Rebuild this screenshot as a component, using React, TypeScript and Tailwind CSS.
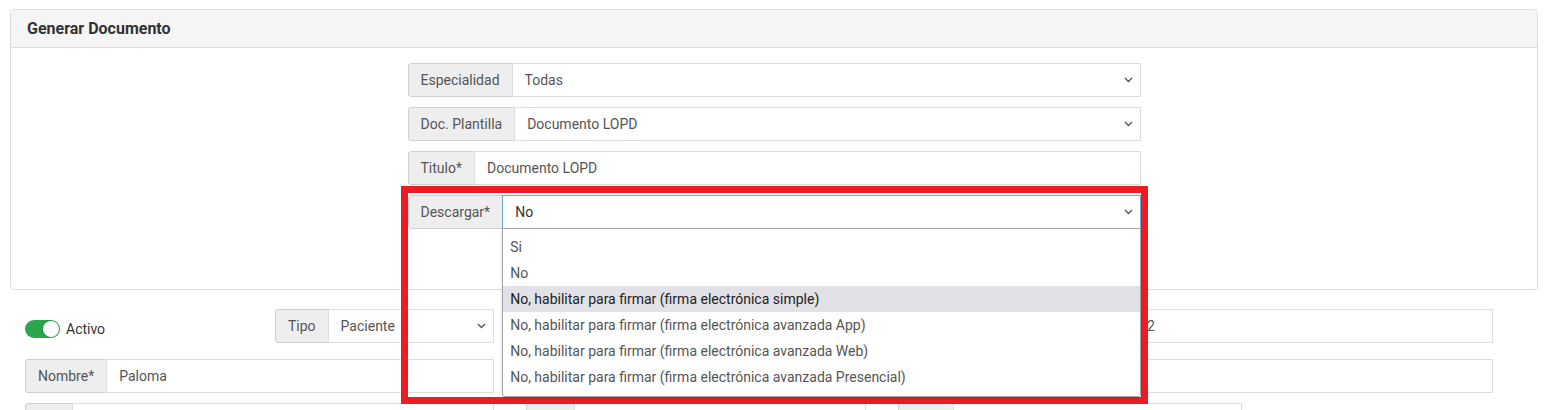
import React from "react";

const Chevron = () => (
  <svg width="9" height="6" viewBox="0 0 9 6" className="shrink-0">
    <path d="M1 1l3.5 3.5L8 1" fill="none" stroke="#555" strokeWidth="1.4" />
  </svg>
);

const Addon = ({ children, className = "" }: { children?: React.ReactNode; className?: string }) => (
  <div
    className={`flex h-full shrink-0 items-center rounded-l-[3px] border border-[#cfcfcf] bg-[#eeeeee] px-3 text-[#555] ${className}`}
  >
    {children}
  </div>
);

const Field = ({
  label,
  value,
  select,
  focus,
  className = "",
  labelClass = "",
  children,
}: {
  label?: string;
  value?: string;
  select?: boolean;
  focus?: boolean;
  className?: string;
  labelClass?: string;
  children?: React.ReactNode;
}) => (
  <div className={`flex h-[34px] ${className}`}>
    <Addon className={labelClass}>{label}</Addon>
    <div
      className={`relative -ml-px flex min-w-0 flex-1 items-center justify-between border bg-white pl-3 pr-[7px] ${
        focus ? "border-[#66a9e0] text-[#333]" : "border-[#dddddd] text-[#555]"
      }`}
    >
      <span className="truncate">{value}</span>
      {select && <Chevron />}
      {children}
    </div>
  </div>
);

const options = [
  "Si",
  "No",
  "No, habilitar para firmar (firma electrónica simple)",
  "No, habilitar para firmar (firma electrónica avanzada App)",
  "No, habilitar para firmar (firma electrónica avanzada Web)",
  "No, habilitar para firmar (firma electrónica avanzada Presencial)",
];

export default function App() {
  return (
    <div className="relative h-[410px] w-[1547px] overflow-hidden bg-white font-['Roboto',sans-serif] text-[14px] text-[#555]">
      {/* Card */}
      <div className="pl-[10px] pr-[9px] pt-[9px]">
        <div className="rounded-[4px] border border-[#dddddd]">
          <div className="flex h-[38px] items-center rounded-t-[4px] border-b border-[#dddddd] bg-[#f5f5f5] px-4 text-[16px] font-bold text-[#333]">
            Generar Documento
          </div>
          <div className="h-[241px] pt-[15px]">
            <div className="mx-auto flex w-[733px] flex-col gap-[10px]">
              <Field label="Especialidad" value="Todas" select />
              <Field label="Doc. Plantilla" value="Documento LOPD" select />
              <Field label="Titulo*" value="Documento LOPD" />
              <Field label="Descargar*" value="No" select focus>
                {/* Open option list */}
                <div className="absolute left-[-1px] top-full z-10 w-[639px] rounded-b-[3px] border border-[#a3a3a3] bg-white pb-[6px] pt-[5px] shadow-[0_2px_4px_rgba(0,0,0,0.12)]">
                  {options.map((o, i) => (
                    <div
                      key={o}
                      className={`flex h-[26px] items-center px-[7px] ${
                        i === 2 ? "bg-[#e1e1e7] text-[#222]" : "text-[#555]"
                      }`}
                    >
                      {o}
                    </div>
                  ))}
                </div>
              </Field>
            </div>
          </div>
        </div>
      </div>

      {/* Patient form, partly covered by the open list */}
      <div className="flex flex-col px-[25px] pt-[19px]">
        <div className="flex gap-8">
          <div className="flex w-[469px] gap-8">
            <div className="flex w-[218px] items-center gap-[6px] pt-[6px] text-[#333]">
              <div className="relative h-[18px] w-[35px] rounded-full bg-[#2aa64b]">
                <div className="absolute right-[1px] top-[1px] h-[16px] w-[16px] rounded-full bg-white shadow-[0_0_2px_rgba(0,0,0,0.35)]" />
              </div>
              <span>Activo</span>
            </div>
            <Field label="Tipo" value="Paciente" select className="w-[219px]" />
          </div>
          <div className="flex w-[967px] gap-8">
            <Field className="w-[527px]" labelClass="w-[90px]" />
            <Field value="2" className="w-[408px]" labelClass="w-[50px]" />
          </div>
        </div>

        <div className="mt-[16px] flex gap-8">
          <Field label="Nombre*" value="Paloma" className="w-[469px]" />
          <Field className="w-[967px]" labelClass="w-[90px]" />
        </div>

        <div className="mt-[10px] flex gap-8">
          <Field className="w-[469px]" labelClass="w-[48px]" />
          <Field className="w-[340px]" labelClass="w-[49px]" />
          <Field className="w-[344px]" labelClass="w-[56px]" />
        </div>
      </div>

      {/* Highlight frame */}
      <div className="absolute left-[401px] top-[186px] h-[218px] w-[747px] border-[7px] border-[#ed1c24]" />
    </div>
  );
}
